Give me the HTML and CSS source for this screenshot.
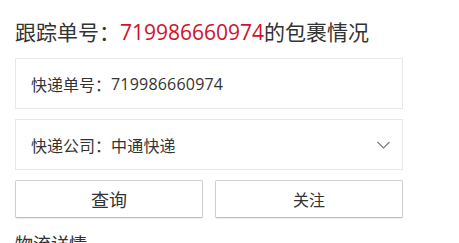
FILE: index.html
```html
<!DOCTYPE html>
<html lang="zh-CN">
<head>
<meta charset="utf-8">
<title>包裹跟踪</title>
<link rel="stylesheet" href="styles.css">
</head>
<body>
<main class="page">
  <h1 class="title">跟踪单号：<span class="num">719986660974</span>的包裹情况</h1>
  <div class="field">
    <span class="label">快递单号：</span><span class="value">719986660974</span>
  </div>
  <div class="field select">
    <span class="label">快递公司：</span><span class="value">中通快递</span>
    <svg class="chev" width="13" height="8" viewBox="0 0 13 8"><path d="M0.5 1 L6.5 7 L12.5 1" fill="none" stroke="#777" stroke-width="1.1"/></svg>
  </div>
  <div class="actions">
    <button class="btn btn-main">查询</button>
    <button class="btn">关注</button>
  </div>
  <h2 class="sub">物流详情</h2>
</main>
</body>
</html>
```
FILE: styles.css
```css
html, body {
  margin: 0;
  padding: 0;
  background: #fff;
  overflow: hidden;
}
body {
  font-family: "Open Sans", "Noto Sans CJK SC", sans-serif;
  color: #333;
}
.page {
  width: 388px;
  padding: 20px 0 0 15px;
}
.title {
  margin: 0;
  font-size: 21px;
  font-weight: normal;
  line-height: 24px;
  color: #333;
}
.num {
  color: #d0112b;
}
.field {
  margin-top: 14px;
  height: 49px;
  border: 1px solid #e8e8e8;
  display: flex;
  align-items: center;
  padding: 0 12px 0 15px;
  font-size: 16px;
}
.field + .field {
  margin-top: 10px;
}
.value {
  letter-spacing: 0.2px;
}
.select .chev {
  margin-left: auto;
}
.actions {
  margin-top: 10px;
  display: grid;
  grid-template-columns: 1fr 1fr;
  gap: 12px;
}
.btn {
  height: 38px;
  background: #fff;
  border: 1px solid #cfcfcf;
  border-bottom-color: #bdbdbd;
  border-radius: 2px;
  box-shadow: 0 1px 1px rgba(0,0,0,0.08);
  font-family: "Noto Sans CJK SC", sans-serif;
  font-size: 16px;
  color: #333;
  padding: 0;
}
.btn-main {
  font-size: 18px;
}
.sub {
  margin: 14px 0 0;
  font-size: 18px;
  font-weight: normal;
  line-height: 24px;
  color: #333;
}
```
